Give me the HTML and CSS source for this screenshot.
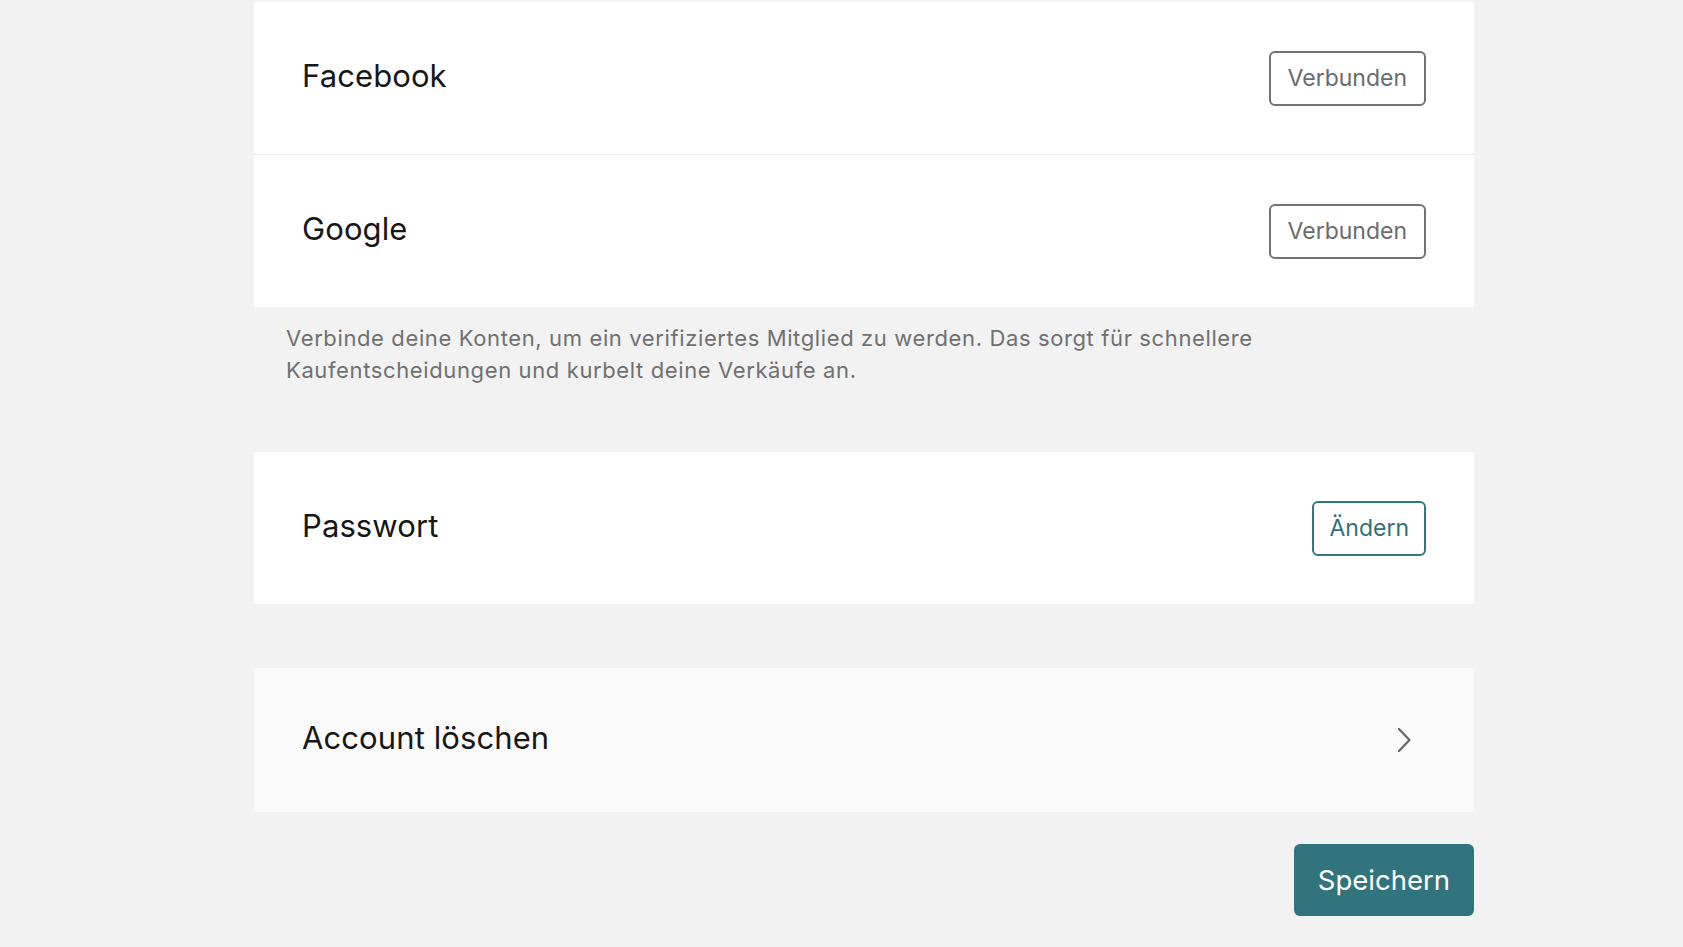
FILE: index.html
```html
<!DOCTYPE html>
<html lang="de">
<head>
    <meta charset="UTF-8">
    <meta name="viewport" content="width=device-width, initial-scale=1.0">
    <title>Einstellungen</title>
    <link rel="stylesheet" href="styles.css">
</head>
<body>

    <div class="page">
        <div class="card">
            <div class="row">
                <span class="label">Facebook</span>
                <button class="btn btn-outline">Verbunden</button>
            </div>
            <div class="row">
                <span class="label">Google</span>
                <button class="btn btn-outline">Verbunden</button>
            </div>
        </div>

        <p class="note">
            Verbinde deine Konten, um ein verifiziertes Mitglied zu werden. Das sorgt für schnellere<br>
            Kaufentscheidungen und kurbelt deine Verkäufe an.
        </p>

        <div class="card card-password">
            <div class="row">
                <span class="label">Passwort</span>
                <button class="btn btn-teal">Ändern</button>
            </div>
        </div>

        <div class="card card-delete">
            <div class="row row-link">
                <span class="label">Account löschen</span>
                <svg class="chevron" width="24" height="24" viewBox="0 0 24 24" fill="none">
                    <path d="M7 1 L17.5 12 L7 23" stroke="#666" stroke-width="2.2" stroke-linecap="round" stroke-linejoin="round"/>
                </svg>
            </div>
        </div>

        <div class="actions">
            <button class="btn btn-primary">Speichern</button>
        </div>
    </div>

</body>
</html>
```

FILE: styles.css
```css
body {
    margin: 0;
    background-color: #f2f2f2;
    font-family: Inter, "Noto Sans", sans-serif;
    color: #171717;
}
.page {
    width: 1220px;
    margin-left: 254px;
    padding-top: 2px;
}
.card {
    background: white;
}
.row {
    display: flex;
    align-items: center;
    justify-content: space-between;
    height: 152px;
    padding: 0 48px;
}
.row + .row {
    border-top: 1px solid #ebebeb;
}
.label {
    font-size: 31px;
    letter-spacing: 0.1px;
    margin-bottom: 5px;
}
.note {
    margin: 0 0 66px;
    padding: 15px 32px 0;
    font-size: 22px;
    letter-spacing: 0.62px;
    line-height: 32px;
    color: #707070;
}
.card-delete {
    margin-top: 64px;
    background: #fafafa;
}
.row-link {
    height: 144px;
    padding-right: 58px;
}
.btn {
    font-family: Inter, "Noto Sans", sans-serif;
    cursor: pointer;
    border-radius: 6px;
    background: white;
}
.btn-outline {
    height: 55px;
    padding: 0 17px;
    font-size: 23px;
    color: #6b6b6b;
    border: 2px solid #727272;
}
.btn-teal {
    height: 55px;
    padding: 0 15px;
    font-size: 23px;
    color: #2f6f78;
    border: 2px solid #34767f;
}
.actions {
    display: flex;
    justify-content: flex-end;
    margin-top: 32px;
}
.btn-primary {
    height: 72px;
    padding: 0 24px;
    font-size: 27.5px;
    color: white;
    border: none;
    background-color: #32747e;
}
```
